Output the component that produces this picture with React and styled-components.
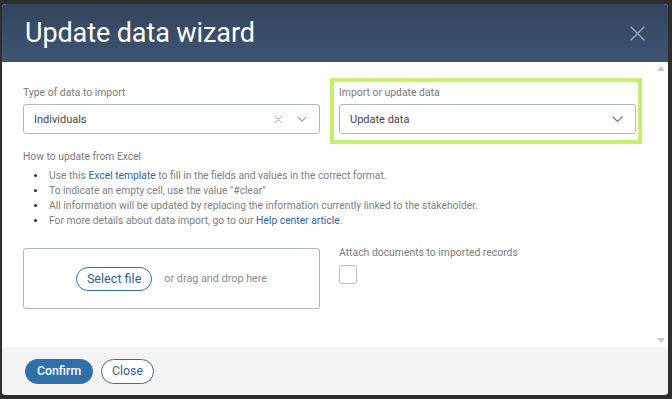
import styled, { createGlobalStyle } from "styled-components";

const Global = createGlobalStyle`
  html, body {
    margin: 0;
    padding: 0;
    background: #2e2e2e;
    font-family: Roboto, "Liberation Sans", sans-serif;
  }
`;

const Page = styled.div`
  width: 672px;
  height: 399px;
  padding: 4px 4px 4px 2px;
  box-sizing: border-box;
`;

const Dialog = styled.div`
  width: 666px;
  height: 391px;
  border-radius: 4px;
  overflow: hidden;
  display: flex;
  flex-direction: column;
  background: #fff;
`;

const Header = styled.div`
  height: 58px;
  flex: none;
  background: linear-gradient(#33445c, #3f5473);
  display: flex;
  align-items: center;
  justify-content: space-between;
  padding: 0 22px 0 23px;
  h1 {
    margin: 0;
    color: #fff;
    font-weight: 400;
    font-size: 27px;
    letter-spacing: -0.1px;
  }
`;

const CloseX = styled.button`
  border: 0;
  background: none;
  padding: 0;
  width: 17px;
  height: 17px;
  cursor: pointer;
  svg {
    display: block;
  }
`;

const Body = styled.div`
  flex: 1;
  position: relative;
  padding: 16px 0 0 12px;
`;

const Scroll = styled.div`
  position: absolute;
  right: 3px;
  top: 4px;
  bottom: 4px;
  width: 8px;
  display: flex;
  flex-direction: column;
  justify-content: space-between;
  align-items: center;
  span {
    width: 0;
    height: 0;
    border-left: 4px solid transparent;
    border-right: 4px solid transparent;
  }
  .up {
    border-bottom: 5px solid #c8c8c8;
  }
  .down {
    border-top: 5px solid #c8c8c8;
  }
`;

const Row = styled.div`
  display: flex;
  align-items: flex-start;
  gap: 4px;
`;

const Field = styled.div`
  width: 297px;
  padding: 5px 2px 6px 5px;
  border: 4px solid ${(p) => (p.highlight ? "#c6f06a" : "transparent")};
`;

const Label = styled.div`
  font-size: 10.4px;
  color: #7a7a7a;
  line-height: 12px;
  margin-bottom: ${(p) => p.gap || 5}px;
`;

const Select = styled.div`
  height: 30px;
  box-sizing: border-box;
  border: 1.5px solid #a8b6cc;
  border-radius: 3px;
  display: flex;
  align-items: center;
  padding: 0 12px 0 10px;
  font-size: 11px;
  color: #444;
  span {
    flex: 1;
  }
  svg {
    display: block;
  }
`;

const Icons = styled.div`
  display: flex;
  align-items: center;
  gap: 14px;
`;

const Help = styled.div`
  margin-top: 7px;
  padding-left: 9px;
  font-size: 10.3px;
  color: #808080;
  h3 {
    font-weight: 400;
    font-size: 10.3px;
    line-height: 12px;
    margin: 0 0 5px 0;
    color: #7a7a7a;
  }
  ul {
    margin: 0;
    padding: 0;
    list-style: none;
  }
  li {
    position: relative;
    line-height: 15px;
    padding-left: 26px;
    white-space: nowrap;
  }
  li::before {
    content: "";
    position: absolute;
    left: 11px;
    top: 6px;
    width: 3px;
    height: 3px;
    border-radius: 50%;
    background: #333;
  }
  a {
    color: #2b66a0;
    text-decoration: none;
  }
`;

const Bottom = styled.div`
  display: flex;
  gap: 19px;
  margin-top: 20px;
  padding-left: 9px;
`;

const Drop = styled.div`
  width: 297px;
  height: 61px;
  box-sizing: border-box;
  border: 1.5px solid #a8b6cc;
  border-radius: 3px;
  display: flex;
  align-items: center;
  justify-content: center;
  gap: 12px;
  font-size: 10.8px;
  color: #8a8a8a;
`;

const Pill = styled.button`
  font-family: inherit;
  height: ${(p) => (p.large ? "24px" : "25px")};
  padding: 0 ${(p) => (p.primary ? "11px" : "10px")};
  border-radius: 13px;
  border: 1px solid #2e71aa;
  background: ${(p) => (p.primary ? "#2e71aa" : "#fff")};
  color: ${(p) => (p.primary ? "#fff" : "#2e6296")};
  font-size: ${(p) => (p.large ? "12.6px" : "12.3px")};
  font-weight: ${(p) => (p.primary ? 500 : 400)};
  cursor: pointer;
`;

const Attach = styled.div`
  margin-top: -1px;
`;

const Checkbox = styled.div`
  width: 18px;
  height: 19px;
  box-sizing: border-box;
  border: 1px solid #bbb;
  border-radius: 3px;
  background: #fff;
`;

const Footer = styled.div`
  height: 48px;
  flex: none;
  background: #f4f4f4;
  display: flex;
  align-items: center;
  gap: 8px;
  padding: 0 0 0 23px;
`;

const Chevron = ({ w }) => (
  <svg width={w} height="6" viewBox="0 0 11 6">
    <path d="M0.5 0.5l5 5 5-5" fill="none" stroke="#777" strokeWidth="1.1" />
  </svg>
);

const Cross = ({ size, color, width }) => (
  <svg width={size} height={size} viewBox="0 0 10 10">
    <path d="M1 1l8 8M9 1l-8 8" fill="none" stroke={color} strokeWidth={width} />
  </svg>
);

export default function App() {
  return (
    <Page>
      <Global />
      <Dialog>
        <Header>
          <h1>Update data wizard</h1>
          <CloseX>
            <Cross size={17} color="#9aa4b2" width="0.9" />
          </CloseX>
        </Header>
        <Body>
          <Scroll>
            <span className="up" />
            <span className="down" />
          </Scroll>
          <Row>
            <Field>
              <Label>Type of data to import</Label>
              <Select>
                <span>Individuals</span>
                <Icons>
                  <Cross size={9} color="#b5b5b5" width="1.1" />
                  <Chevron w={10} />
                </Icons>
              </Select>
            </Field>
            <Field highlight>
              <Label>Import or update data</Label>
              <Select>
                <span>Update data</span>
                <Chevron w={11} />
              </Select>
            </Field>
          </Row>
          <Help>
            <h3>How to update from Excel</h3>
            <ul>
              <li>
                Use this <a href="#">Excel template</a> to fill in the fields and
                values in the correct format.
              </li>
              <li>To indicate an empty cell, use the value "#clear"</li>
              <li>
                All information will be updated by replacing the information
                currently linked to the stakeholder.
              </li>
              <li>
                For more details about data import, go to our{" "}
                <a href="#">Help center article</a>.
              </li>
            </ul>
          </Help>
          <Bottom>
            <Drop>
              <Pill large>Select file</Pill>
              <span>or drag and drop here</span>
            </Drop>
            <Attach>
              <Label gap={6}>Attach documents to imported records</Label>
              <Checkbox />
            </Attach>
          </Bottom>
        </Body>
        <Footer>
          <Pill primary>Confirm</Pill>
          <Pill>Close</Pill>
        </Footer>
      </Dialog>
    </Page>
  );
}
